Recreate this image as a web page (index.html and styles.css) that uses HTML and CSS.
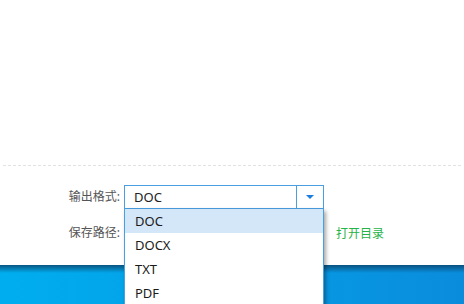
FILE: index.html
```html
<!DOCTYPE html>
<html lang="zh-CN">
<head>
  <meta charset="UTF-8" />
  <meta name="viewport" content="width=device-width, initial-scale=1.0" />
  <title>输出设置</title>
  <link rel="stylesheet" href="styles.css">
</head>
<body>
  <div class="content"></div>
  <div class="form">
    <label class="label">输出格式:</label>
    <div class="select-wrap">
      <div class="select">
        <span class="value">DOC</span>
        <span class="arrow">
          <svg width="8" height="4" viewBox="0 0 8 4"><path d="M0 0H8L4 4Z" fill="#1a7de0"/></svg>
        </span>
      </div>
      <ul class="options">
        <li class="active">DOC</li>
        <li>DOCX</li>
        <li>TXT</li>
        <li>PDF</li>
      </ul>
    </div>
    <span></span>

    <label class="label">保存路径:</label>
    <input type="text" class="path" />
    <a class="open-dir">打开目录</a>
  </div>
  <div class="footer"></div>
</body>
</html>
```

FILE: styles.css
```css
* {
  margin: 0;
  padding: 0;
  box-sizing: border-box;
}
body {
  font-family: "Noto Sans", "Noto Sans CJK SC", sans-serif;
  background: #fff;
  color: #222;
  width: 464px;
  height: 304px;
  overflow: hidden;
}
.content {
  height: 166px;
  margin: 0 3px;
  border-bottom: 1px dashed #e2e2e2;
}
.form {
  display: grid;
  grid-template-columns: 120px 200px auto;
  column-gap: 4px;
  row-gap: 12px;
  align-items: center;
  padding: 19px 0 20px;
}
.label {
  text-align: right;
  font-size: 12px;
  line-height: 24px;
  color: #555;
}
.select-wrap {
  position: relative;
}
.select {
  display: flex;
  height: 24px;
  border: 1px solid #4a9fe3;
  background: #fff;
}
.value {
  flex: 1;
  padding-left: 9px;
  font-size: 13px;
  line-height: 22px;
}
.arrow {
  width: 27px;
  border-left: 1px solid #4a9fe3;
  display: flex;
  align-items: center;
  justify-content: center;
}
.options {
  position: absolute;
  top: 100%;
  left: 0;
  width: 200px;
  list-style: none;
  background: #fff;
  border-left: 1px solid #4a9fe3;
  border-right: 1px solid #4a9fe3;
  box-shadow: 2px 2px 4px rgba(0, 0, 0, 0.35);
  z-index: 2;
}
.options li {
  height: 24px;
  line-height: 24px;
  padding-left: 10px;
  font-size: 13px;
  color: #1a1a1a;
}
.options li.active {
  background: #d3e7f8;
}
.path {
  height: 24px;
  border: 1px solid #ccc;
}
.open-dir {
  margin-left: 8px;
  font-size: 12px;
  color: #26b347;
  cursor: pointer;
}
.footer {
  height: 39px;
  background:
    linear-gradient(to bottom, rgba(10, 70, 110, 0.85), rgba(10, 70, 110, 0) 8px),
    linear-gradient(to right, #00aeef, #0a8cdc);
}
```
